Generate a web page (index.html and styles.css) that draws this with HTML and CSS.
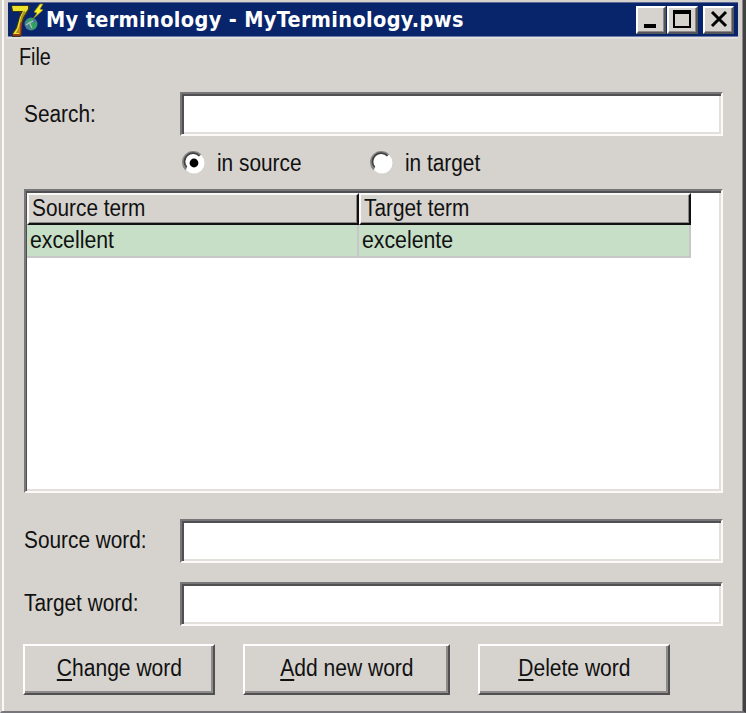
FILE: index.html
```html
<!DOCTYPE html>
<html lang="en">
<head>
<meta charset="utf-8">
<title>My terminology - MyTerminology.pws</title>
<link rel="stylesheet" href="styles.css">
</head>
<body>
<main class="window">
  <header class="titlebar">
    <svg class="app-icon" viewBox="0 0 34 34">
      <path d="M0 3 2 2H18L19 5 14 14 11 23V32L9 34H1V30L5 24 9 11 8 9H1Z" fill="#3a351c"/>
      <path d="M1 3H17V6L12 14 9 23V31H2L6 25 9 14 12 8H2Z" fill="#ece22c"/>
      <path d="M13 8 15 9 11 16 9 24 8 30H5L8 24 10 14Z" fill="#a8931c"/>
      <path d="M10 20 9 32M2 32H9" stroke="#b83a20" stroke-width="1.6" fill="none"/>
      <circle cx="20" cy="21" r="6.5" fill="#477f91"/>
      <path d="M15 19 20 15 23 16 21 20 26 20 25 25 20 27 19 23Z" fill="#2fa35a"/>
      <path d="M15 22 18 20 22 18M18 19 21 25" stroke="#a3b9c0" stroke-width="1.4" fill="none"/>
      <path d="M29 1 32 1 29 6 32 7 22 16 26 10 23 9Z" fill="#f8f024" stroke="#8d8523" stroke-width=".7"/>
    </svg>
    <h1 class="title">My terminology - MyTerminology.pws</h1>
    <div class="controls">
      <button class="control" aria-label="Minimize"><svg viewBox="0 0 30 28"><path d="M8 18H20V22H8Z"/></svg></button>
      <button class="control maximize" aria-label="Maximize"><svg viewBox="0 0 30 28"><path fill-rule="evenodd" d="M6 4H24V22H6ZM8 8V20H22V8Z"/></svg></button>
      <button class="control close" aria-label="Close"><svg viewBox="0 0 30 28"><path d="M9 6 23 20M23 6 9 20" stroke="#000" stroke-width="3"/></svg></button>
    </div>
  </header>
  <nav class="menu"><span class="label file">File</span></nav>
  <section class="content">
    <div class="row"><label class="label caption" for="search">Search:</label><input class="field" id="search"></div>
    <div class="options">
      <div class="option"><svg class="radio" viewBox="0 0 24 24"><circle cx="12" cy="12" r="10.5" fill="#fff"/><path d="M4 18.5A10 10 0 0 1 18.5 4" fill="none" stroke="#858585" stroke-width="2"/><path d="M4.7 16.5A8.5 8.5 0 0 1 17.5 5" fill="none" stroke="#3f3f3f" stroke-width="1.7"/><circle cx="12" cy="12" r="4.4"/></svg><span class="label">in source</span></div>
      <div class="option"><svg class="radio" viewBox="0 0 24 24"><circle cx="12" cy="12" r="10.5" fill="#fff"/><path d="M4 18.5A10 10 0 0 1 18.5 4" fill="none" stroke="#858585" stroke-width="2"/><path d="M4.7 16.5A8.5 8.5 0 0 1 17.5 5" fill="none" stroke="#3f3f3f" stroke-width="1.7"/></svg><span class="label">in target</span></div>
    </div>
    <div class="list">
      <div class="grid">
        <div class="head"><span class="label">Source term</span></div>
        <div class="head"><span class="label">Target term</span></div>
        <div class="cell"><span class="label wide">excellent</span></div>
        <div class="cell"><span class="label wide">excelente</span></div>
      </div>
    </div>
    <div class="row source"><label class="label caption" for="source">Source word:</label><input class="field" id="source"></div>
    <div class="row target"><label class="label caption" for="target">Target word:</label><input class="field" id="target"></div>
    <div class="actions">
      <button class="action"><span class="label"><u>C</u>hange word</span></button>
      <button class="action add"><span class="label"><u>A</u>dd new word</span></button>
      <button class="action"><span class="label"><u>D</u>elete word</span></button>
    </div>
  </section>
</main>
</body>
</html>
```
FILE: styles.css
```css
* { box-sizing: border-box; }
html, body { margin: 0; height: 100%; overflow: hidden; }
body { background: #d6d3ce; font: 23px/28px "Liberation Sans", Arial, sans-serif; color: #111; }
button, input { font: inherit; color: inherit; border-radius: 0; margin: 0; }
.window { height: 713px; padding: 2px 5px 0 4px; border-left: 2px solid #d6d3ce; border-right: 3px solid #424244; border-bottom: 2px solid #77777b; box-shadow: inset 2px 0 #faf9f7, inset -1px 0 #8a8987; }
.titlebar { display: flex; align-items: center; height: 35px; margin-left: 2px; padding: 0 4px 0 3px; background: #08246b; border-top: 1px solid #5b6993; border-bottom: 1px solid #6f7dad; }
.app-icon { width: 34px; height: 34px; flex: none; }
.title { margin: 0; padding-left: 1px; font: bold 21.5px/28px "DejaVu Sans Condensed", "DejaVu Sans", sans-serif; letter-spacing: .35px; color: #fff; white-space: nowrap; }
.controls { display: flex; margin-left: auto; gap: 1px; }
.control { width: 30px; height: 28px; padding: 0; background: #d6d3ce; border: 2px solid; border-color: #fff #55565b #55565b #fff; box-shadow: inset -1px -1px #8a8986; }
.control svg { display: block; width: 30px; height: 28px; margin: -2px; }
.maximize { width: 31px; }
.close { width: 31px; margin-left: 4px; }
.menu { height: 55px; padding: 4px 0 0 13px; border-top: 2px solid #e2e0dc; }
.label { display: inline-block; white-space: nowrap; transform: scaleX(.905); transform-origin: left; }
.file { transform: scaleX(.86); }
.wide { transform: scaleX(.925); }
.content { padding: 0 15px 0 18px; }
.row { display: flex; align-items: center; height: 44px; }
.caption { width: 156px; flex: none; }
.field { width: 543px; height: 44px; outline: 0; background: #fff; border: 2px solid; border-color: #77777a #fbfaf8 #fbfaf8 #77777a; box-shadow: inset 2px 2px #505053, inset -2px -2px #e3e0dc; }
.options { display: flex; height: 53px; padding-left: 158px; }
.option { display: flex; align-items: center; width: 188px; height: 54px; gap: 11px; }
.radio { width: 24px; height: 24px; flex: none; }
.list { width: 699px; height: 304px; background: #fff; border: 2px solid; border-color: #77777a #fbfaf8 #fbfaf8 #77777a; box-shadow: inset 1px 2px #505053, inset -2px -2px #e3e0dc; padding: 2px 0 0 1px; }
.grid { display: grid; grid-template-columns: 332px 332px; grid-template-rows: 32px 33px; width: 664px; }
.head { padding: 0 0 0 3px; line-height: 26px; background: #d6d3ce; border: 2px solid; border-color: #faf9f7 #111 #111 #faf9f7; box-shadow: inset -1px -1px #8a8986; }
.cell { padding: 1px 0 0 3px; background: #c6dfc6; border-right: 2px solid #c7c6c8; border-bottom: 2px solid #c7c6c8; }
.source { margin-top: 26px; }
.target { margin-top: 19px; }
.source .caption, .target .caption { margin-bottom: 2px; }
.actions { display: flex; gap: 28px; height: 51px; margin: 18px 0 0 -1px; }
.action { width: 192px; padding: 0 0 3px; background: #d6d3ce; border: 2px solid; border-color: #fff #505053 #505053 #fff; box-shadow: inset -2px -2px #8d8c8b; }
.action .label { transform: scaleX(.915); transform-origin: center; }
.add { width: 207px; }
u { text-decoration-thickness: 2px; text-underline-offset: 3px; text-decoration-skip-ink: none; }
```
